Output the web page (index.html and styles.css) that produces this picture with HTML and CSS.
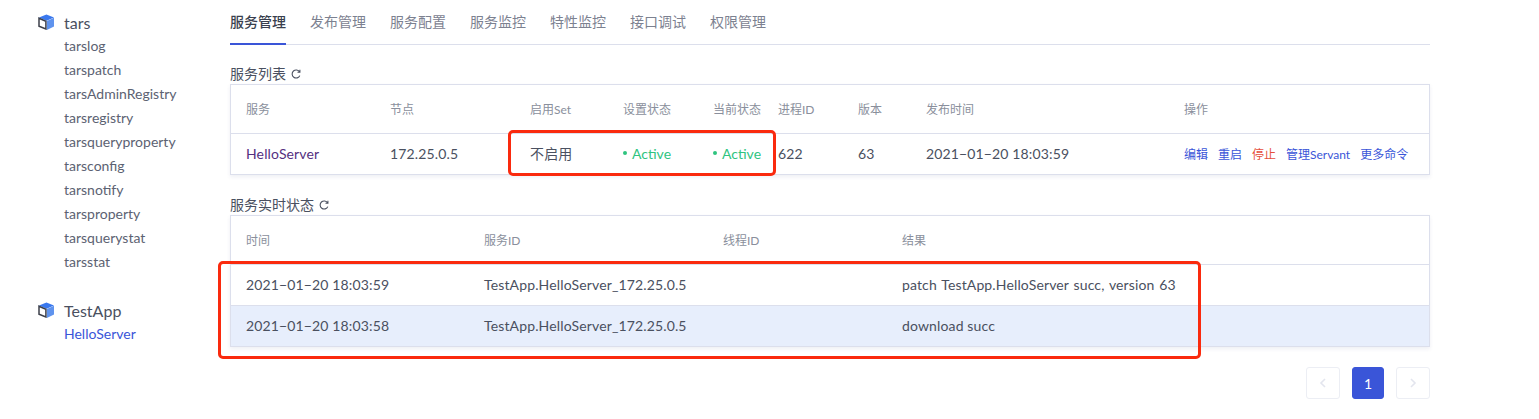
FILE: index.html
```html
<!DOCTYPE html>
<html>
    <head>
        <title>服务管理</title>
        <link rel="stylesheet" href="styles.css">
    </head>
    <body>
        <div class="page">
            <aside class="sidebar">
                <div class="app">
                    <div class="app-name">
                        <svg class="cube" viewBox="0 0 16 16"><path d="M8.4 .6 16 3.6 8.6 6.8 1 3.6Z" fill="#3a78ee"/><path d="M8.8 7 16 3.8V12.4L8.8 16Z" fill="#5f93ee"/><path d="M1 4.2 7.9 7.2V15L1 12.2Z" fill="#fff" stroke="#3c3f4a" stroke-width="1.5"/></svg>
                        tars
                    </div>
                    <a>tarslog</a>
                    <a>tarspatch</a>
                    <a>tarsAdminRegistry</a>
                    <a>tarsregistry</a>
                    <a>tarsqueryproperty</a>
                    <a>tarsconfig</a>
                    <a>tarsnotify</a>
                    <a>tarsproperty</a>
                    <a>tarsquerystat</a>
                    <a>tarsstat</a>
                </div>
                <div class="app">
                    <div class="app-name">
                        <svg class="cube" viewBox="0 0 16 16"><path d="M8.4 .6 16 3.6 8.6 6.8 1 3.6Z" fill="#3a78ee"/><path d="M8.8 7 16 3.8V12.4L8.8 16Z" fill="#5f93ee"/><path d="M1 4.2 7.9 7.2V15L1 12.2Z" fill="#fff" stroke="#3c3f4a" stroke-width="1.5"/></svg>
                        TestApp
                    </div>
                    <a class="current">HelloServer</a>
                </div>
            </aside>

            <main class="main">
                <nav class="tabs">
                    <a class="active">服务管理</a>
                    <a>发布管理</a>
                    <a>服务配置</a>
                    <a>服务监控</a>
                    <a>特性监控</a>
                    <a>接口调试</a>
                    <a>权限管理</a>
                </nav>

                <h4 class="title">服务列表
                    <svg class="refresh" viewBox="0 0 12 12"><path d="M9.8 7.6A4 4 0 1 1 9.6 4M9.9 1.8V4.2H7.5" fill="none" stroke="#4a5060" stroke-width="1.1"/></svg>
                </h4>
                <div class="table">
                    <div class="row services head">
                        <span>服务</span><span>节点</span><span>启用Set</span><span>设置状态</span><span>当前状态</span><span>进程ID</span><span>版本</span><span>发布时间</span><span>操作</span>
                    </div>
                    <div class="row services body">
                        <span class="link">HelloServer</span>
                        <span>172.25.0.5</span>
                        <span>不启用</span>
                        <span class="ok"><i class="dot"></i>Active</span>
                        <span class="ok"><i class="dot"></i>Active</span>
                        <span>622</span>
                        <span>63</span>
                        <span>2021−01−20 18:03:59</span>
                        <span class="ops"><a>编辑</a><a>重启</a><a class="stop">停止</a><a>管理Servant</a><a>更多命令</a></span>
                    </div>
                </div>

                <h4 class="title second">服务实时状态
                    <svg class="refresh" viewBox="0 0 12 12"><path d="M9.8 7.6A4 4 0 1 1 9.6 4M9.9 1.8V4.2H7.5" fill="none" stroke="#4a5060" stroke-width="1.1"/></svg>
                </h4>
                <div class="table">
                    <div class="row status head">
                        <span>时间</span><span>服务ID</span><span>线程ID</span><span>结果</span>
                    </div>
                    <div class="row status body">
                        <span>2021−01−20 18:03:59</span>
                        <span>TestApp.HelloServer_172.25.0.5</span>
                        <span></span>
                        <span class="result">patch TestApp.HelloServer succ, version 63</span>
                    </div>
                    <div class="row status body selected">
                        <span>2021−01−20 18:03:58</span>
                        <span>TestApp.HelloServer_172.25.0.5</span>
                        <span></span>
                        <span>download succ</span>
                    </div>
                </div>

                <div class="pager">
                    <button class="page-btn"><svg viewBox="0 0 10 12"><path d="M7 2 3 6l4 4" fill="none" stroke="#e3e5ee" stroke-width="1.6"/></svg></button>
                    <button class="page-btn current-page">1</button>
                    <button class="page-btn"><svg viewBox="0 0 10 12"><path d="M3 2l4 4-4 4" fill="none" stroke="#e3e5ee" stroke-width="1.6"/></svg></button>
                </div>
            </main>
        </div>

        <div class="mark mark-state"></div>
        <div class="mark mark-rows"></div>
    </body>
</html>
```

FILE: styles.css
```css
* {
    box-sizing: border-box;
}

body {
    margin: 0;
    background-color: #FFF;
    color: #4a5060;
    font-family: Lato, 'Noto Sans CJK SC', sans-serif;
    font-size: 14px;
}

.page {
    display: flex;
    height: 419px;
    overflow: hidden;
}

.sidebar {
    width: 230px;
    padding: 10px 0 0 38px;
}
.app {
    margin-bottom: 24px;
}
.app-name {
    display: flex;
    align-items: center;
    gap: 10px;
    height: 24px;
    font-size: 16px;
}
.cube {
    width: 16px;
    height: 16px;
}
.app a {
    display: block;
    height: 24px;
    line-height: 24px;
    margin-left: 26px;
    color: #5c6272;
}
.app a.current {
    color: #3a55d8;
}

.main {
    width: 1200px;
}

.tabs {
    display: flex;
    gap: 24px;
    height: 45px;
    border-bottom: 1px solid #dcdfec;
}
.tabs a {
    height: 45px;
    padding-top: 11px;
    line-height: 21px;
    color: #7c8190;
}
.tabs a.active {
    color: #3a3f4e;
    font-weight: 500;
    border-bottom: 2px solid #3a55d8;
}

.title {
    display: flex;
    align-items: center;
    gap: 4px;
    height: 20px;
    margin: 19px 0 0;
    padding-bottom: 2px;
    font-size: 14px;
    font-weight: 400;
    color: #4a5060;
}
.title.second {
    margin-top: 20px;
}
.refresh {
    width: 12px;
    height: 12px;
    margin-top: 2px;
}

.table {
    border: 1px solid #dcdfec;
    box-shadow: 0 2px 4px rgba(40, 50, 110, 0.08);
}
.row {
    display: grid;
    align-items: center;
    padding: 0 0 2px 15px;
}
.services {
    grid-template-columns: 144px 140px 93px 90px 65px 80px 68px 258px 1fr;
}
.status {
    grid-template-columns: 238px 239px 179px 1fr;
}
.head {
    height: 48px;
    font-size: 12px;
    color: #8a8f9c;
}
.body {
    height: 41px;
    font-size: 14px;
    letter-spacing: 0.14px;
    border-top: 1px solid #dcdfec;
}
.selected {
    background-color: #e7eefc;
}
.link {
    color: #55307f;
}
.result {
    word-spacing: 1px;
}
.ok {
    display: flex;
    align-items: center;
    gap: 5px;
    letter-spacing: 0;
    color: #2fc47f;
}
.dot {
    width: 4px;
    height: 4px;
    border-radius: 50%;
    background-color: #2fc47f;
}
.ops {
    display: flex;
    gap: 10px;
    font-size: 12px;
    letter-spacing: 0;
}
.ops a {
    color: #3a55d8;
}
.ops a.stop {
    color: #e5503c;
}

.pager {
    display: flex;
    justify-content: flex-end;
    gap: 12px;
    margin-top: 20px;
}
.page-btn {
    display: flex;
    align-items: center;
    justify-content: center;
    width: 34px;
    height: 32px;
    padding: 0;
    background: #FFF;
    border: 1px solid #eceef4;
    border-radius: 3px;
    font-family: Lato, sans-serif;
    font-size: 14px;
}
.page-btn svg {
    width: 10px;
    height: 12px;
}
.page-btn.current-page {
    width: 32px;
    background-color: #3a55d8;
    border-color: #3a55d8;
    color: #FFF;
}

/* red marks drawn over the screenshot */
.mark {
    position: absolute;
    border: 3px solid #fa2a0e;
    border-radius: 5px;
}
.mark-state {
    left: 508px;
    top: 130px;
    width: 268px;
    height: 46px;
}
.mark-rows {
    left: 218px;
    top: 261px;
    width: 983px;
    height: 98px;
}
```
